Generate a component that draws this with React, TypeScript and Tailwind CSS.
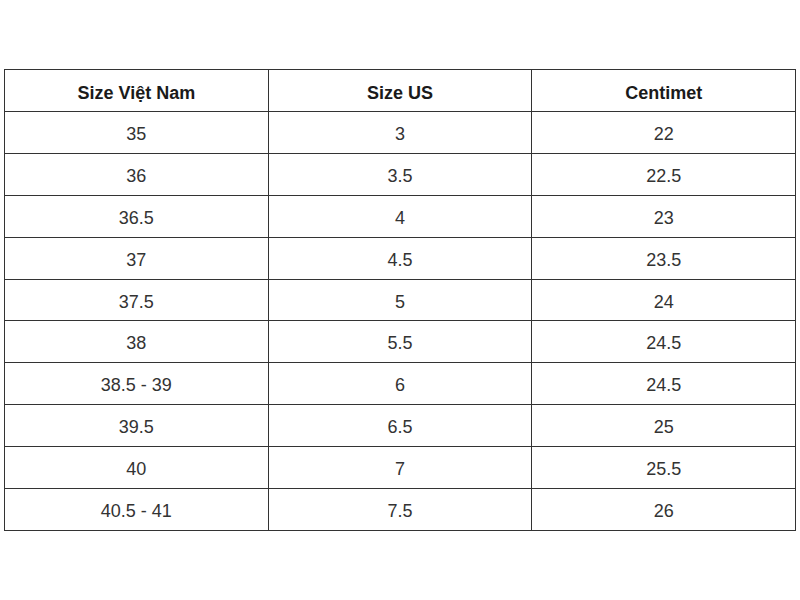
import React from 'react';

const rows: [string, string, string][] = [
  ['35', '3', '22'],
  ['36', '3.5', '22.5'],
  ['36.5', '4', '23'],
  ['37', '4.5', '23.5'],
  ['37.5', '5', '24'],
  ['38', '5.5', '24.5'],
  ['38.5 - 39', '6', '24.5'],
  ['39.5', '6.5', '25'],
  ['40', '7', '25.5'],
  ['40.5 - 41', '7.5', '26'],
];

const App: React.FC = () => {
  return (
    <div
      className="w-[800px] h-[600px] bg-white pt-[69px] pl-[4px]"
      style={{ fontFamily: "'Liberation Sans', Arial, sans-serif" }}
    >
      <table className="w-[792px] border-collapse table-fixed text-[18px]">
        <thead>
          <tr className="h-[42px]">
            <th className="border border-[#333] pt-[5px] font-bold text-[#1a1a1a]">Size Việt Nam</th>
            <th className="border border-[#333] pt-[5px] font-bold text-[#1a1a1a]">Size US</th>
            <th className="border border-[#333] pt-[5px] font-bold text-[#1a1a1a]">Centimet</th>
          </tr>
        </thead>
        <tbody>
          {rows.map((r, i) => (
            <tr key={i} className="h-[41.9px]">
              {r.map((c, j) => (
                <td key={j} className="border border-[#333] pt-[4px] text-center text-[#333]">
                  {c}
                </td>
              ))}
            </tr>
          ))}
        </tbody>
      </table>
    </div>
  );
};

export default App;
